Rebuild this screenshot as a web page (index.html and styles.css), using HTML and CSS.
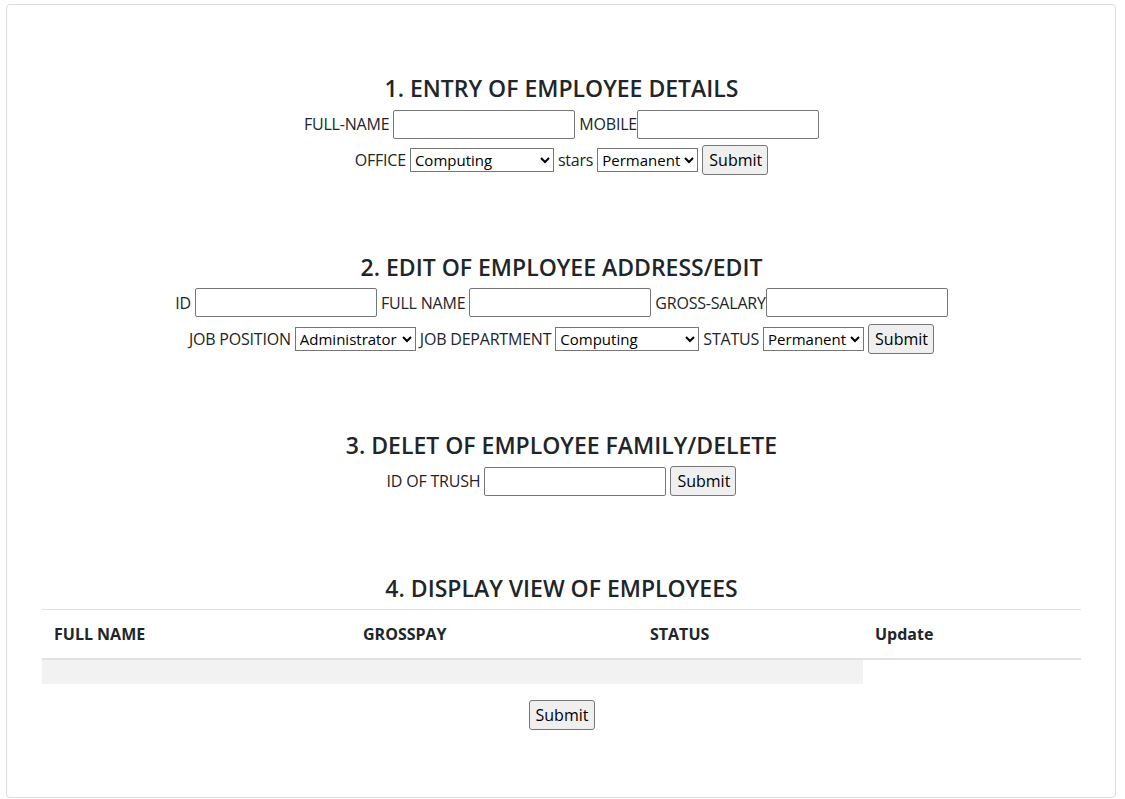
FILE: index.html
```html
<!DOCTYPE html>
<html lang="en">
<head>
    <meta charset="UTF-8">
    <meta name="viewport" content="width=device-width, initial-scale=1.0">
    <title>Employee Records</title>
    <link rel="stylesheet" href="styles.css">
</head>
<body>

<!-- Main Card -->
<div class="card">

    <!-- 1. Entry -->
    <div class="section">
        <h3>1. ENTRY OF EMPLOYEE DETAILS</h3>
        <div class="form-row">
            <label>FULL-NAME</label>
            <input type="text" class="field">
            <label>MOBILE</label>
            <input type="text" class="field tight">
        </div>
        <div class="form-row">
            <label>OFFICE</label>
            <select class="sel-wide">
                <option>Computing</option>
            </select>
            <label>stars</label>
            <select class="sel-status">
                <option>Permanent</option>
            </select>
            <button>Submit</button>
        </div>
    </div>

    <!-- 2. Edit -->
    <div class="section">
        <h3>2. EDIT OF EMPLOYEE ADDRESS/EDIT</h3>
        <div class="form-row">
            <label>ID</label>
            <input type="text" class="field">
            <label>FULL NAME</label>
            <input type="text" class="field">
            <label>GROSS-SALARY</label>
            <input type="text" class="field tight">
        </div>
        <div class="form-row">
            <label>JOB POSITION</label>
            <select class="sel-job">
                <option>Administrator</option>
            </select>
            <label>JOB DEPARTMENT</label>
            <select class="sel-wide">
                <option>Computing</option>
            </select>
            <label>STATUS</label>
            <select class="sel-status">
                <option>Permanent</option>
            </select>
            <button>Submit</button>
        </div>
    </div>

    <!-- 3. Delete -->
    <div class="section">
        <h3>3. DELET OF EMPLOYEE FAMILY/DELETE</h3>
        <div class="form-row">
            <label>ID OF TRUSH</label>
            <input type="text" class="field">
            <button>Submit</button>
        </div>
    </div>

    <!-- 4. Display -->
    <div class="section last">
        <h3>4. DISPLAY VIEW OF EMPLOYEES</h3>
        <table class="table">
            <thead>
                <tr>
                    <th class="col-name">FULL NAME</th>
                    <th class="col-pay">GROSSPAY</th>
                    <th class="col-status">STATUS</th>
                    <th>Update</th>
                </tr>
            </thead>
            <tbody>
                <tr>
                    <td></td>
                    <td></td>
                    <td></td>
                </tr>
            </tbody>
        </table>
        <button>Submit</button>
    </div>

</div>

</body>
</html>
```

FILE: styles.css
```css
/* Global Styles */
body {
    font-family: 'Segoe UI', 'Open Sans', 'Noto Sans', sans-serif;
    font-size: 16px;
    line-height: 1.5;
    color: #212529;
    margin: 0;
    padding: 4px 9px 2px 6px;
    background: #ffffff;
}

/* Card */
.card {
    border: 1px solid #dcdcdc;
    border-radius: 4px;
    height: 794px;
    box-sizing: border-box;
    padding: 69px 34px 0 35px;
}

/* Sections */
.section {
    display: flex;
    flex-direction: column;
    align-items: center;
    gap: 6px;
    margin-bottom: 77.5px;
}

.section.last {
    margin-bottom: 0;
    gap: 0;
}

h3 {
    font-size: 23px;
    font-weight: 600;
    line-height: 29px;
    margin: 0;
    color: #212529;
}

/* Form rows */
.form-row {
    display: flex;
    align-items: center;
    justify-content: center;
    gap: 4px;
    height: 30px;
}

label {
    white-space: nowrap;
    letter-spacing: -0.2px;
}

input,
select,
button {
    font-family: inherit;
    font-size: 16px;
    color: #000;
    box-sizing: border-box;
    margin: 0;
}

.field {
    width: 182px;
    height: 29px;
    border: 1px solid #767676;
    border-radius: 2px;
    padding: 1px 2px;
}

.field.tight {
    margin-left: -4px;
}

select {
    height: 24px;
    border: 1px solid #767676;
    border-radius: 0;
    background: #fff;
    padding: 0;
    font-size: 15px;
    line-height: 20px;
}

.sel-wide { width: 144px; }
.sel-status { width: 101px; }
.sel-job { width: 121px; }

button {
    width: 66px;
    height: 30px;
    border: 1px solid #767676;
    border-radius: 3px;
    background-color: #efefef;
    padding: 1px 6px;
    cursor: pointer;
}

/* Table */
.table {
    width: 100%;
    border-collapse: collapse;
    margin-top: 6px;
    margin-bottom: 16px;
}

.table th {
    text-align: left;
    font-weight: bold;
    padding: 12px;
    border-top: 1px solid #dee2e6;
    border-bottom: 2px solid #dee2e6;
    vertical-align: bottom;
}

.table td {
    height: 24px;
    padding: 0;
    background-color: #f2f2f2;
}

.col-name { width: 285px; }
.col-pay { width: 263px; }
.col-status { width: 201px; }
```
